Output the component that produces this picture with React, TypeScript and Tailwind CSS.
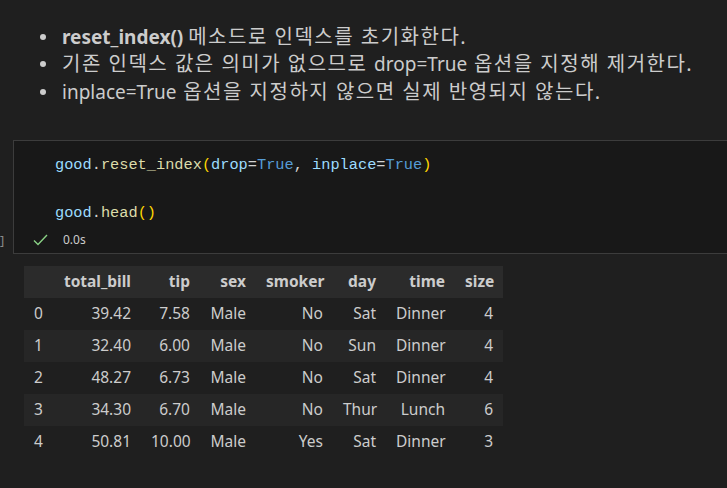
import React from "react";

const sans = "font-['Segoe_UI','Noto_Sans','Noto_Sans_CJK_KR',sans-serif]";

const cols = ["", "total_bill", "tip", "sex", "smoker", "day", "time", "size"];

const rows = [
  ["0", "39.42", "7.58", "Male", "No", "Sat", "Dinner", "4"],
  ["1", "32.40", "6.00", "Male", "No", "Sun", "Dinner", "4"],
  ["2", "48.27", "6.73", "Male", "No", "Sat", "Dinner", "4"],
  ["3", "34.30", "6.70", "Male", "No", "Thur", "Lunch", "6"],
  ["4", "50.81", "10.00", "Male", "Yes", "Sat", "Dinner", "3"],
];

function Ko({ children }: { children: React.ReactNode }) {
  return <span className="text-[20px] tracking-[1.5px]">{children}</span>;
}

function Bullet({ children }: { children: React.ReactNode }) {
  return (
    <li className="flex items-center h-[27.5px] whitespace-nowrap">
      <span className="w-[22px] flex justify-start">
        <span className="block w-[6px] h-[6px] rounded-full bg-[#cccccc]" />
      </span>
      <span>{children}</span>
    </li>
  );
}

function Code() {
  return (
    <div className="font-['Liberation_Mono',monospace] text-[15.3px] leading-[24px] pl-[41px] pt-[12px] whitespace-pre">
      <div>
        <span className="text-[#9cdcfe]">good</span>
        <span className="text-[#d4d4d4]">.</span>
        <span className="text-[#dcdcaa]">reset_index</span>
        <span className="text-[#ffd700]">(</span>
        <span className="text-[#9cdcfe]">drop</span>
        <span className="text-[#d4d4d4]">=</span>
        <span className="text-[#569cd6]">True</span>
        <span className="text-[#d4d4d4]">, </span>
        <span className="text-[#9cdcfe]">inplace</span>
        <span className="text-[#d4d4d4]">=</span>
        <span className="text-[#569cd6]">True</span>
        <span className="text-[#ffd700]">)</span>
      </div>
      <div>&nbsp;</div>
      <div>
        <span className="text-[#9cdcfe]">good</span>
        <span className="text-[#d4d4d4]">.</span>
        <span className="text-[#dcdcaa]">head</span>
        <span className="text-[#ffd700]">()</span>
      </div>
    </div>
  );
}

export default function App() {
  return (
    <div className={`w-[727px] h-[488px] overflow-hidden bg-[#1f1f1f] text-[#cccccc] ${sans}`}>
      <ul className="pt-[23px] pl-[40px] text-[19px]">
        <Bullet>
          <b className="font-bold">reset_index()</b> <Ko>메소드로 인덱스를 초기화한다.</Ko>
        </Bullet>
        <Bullet>
          <Ko>기존 인덱스 값은 의미가 없으므로 </Ko>drop=True<Ko> 옵션을 지정해 제거한다.</Ko>
        </Bullet>
        <Bullet>
          inplace=True<Ko> 옵션을 지정하지 않으면 실제 반영되지 않는다.</Ko>
        </Bullet>
      </ul>

      <div className="flex mt-[34px]">
        <div className="w-[13px] flex flex-col justify-end pb-[2px] text-[13px] text-[#8a8a8a]">
          <span className="leading-[24px]">]</span>
        </div>
        <div className="flex-1 h-[114px] border border-r-0 border-[#3c3c3c] bg-[#181818]">
          <Code />
          <div className="flex items-center h-[24px] mt-[3px] pl-[19px]">
            <svg width="15" height="12" viewBox="0 0 15 12" fill="none">
              <path d="M1 6.5 L5 10.5 L14 1" stroke="#89d185" strokeWidth="1.4" />
            </svg>
            <span className="ml-[15px] text-[12px] text-[#cccccc]">0.0s</span>
          </div>
        </div>
      </div>

      <div className="ml-[24px] mt-[12px] w-[479px] text-[15.5px]">
        <div className="grid grid-cols-[28px_89px_59px_56px_77px_53px_69px_48px] h-[32px] items-center bg-[#2b2b2b] font-bold">
          {cols.map((c, i) => (
            <div key={i} className="text-right px-[10px] whitespace-nowrap">
              {c}
            </div>
          ))}
        </div>
        {rows.map((r, ri) => (
          <div
            key={ri}
            className={`grid grid-cols-[28px_89px_59px_56px_77px_53px_69px_48px] h-[32px] items-center ${
              ri % 2 === 1 ? "bg-[#262626]" : ""
            }`}
          >
            {r.map((v, i) => (
              <div
                key={i}
                className={`px-[10px] whitespace-nowrap ${i === 0 ? "text-left" : "text-right"}`}
              >
                {v}
              </div>
            ))}
          </div>
        ))}
      </div>
    </div>
  );
}
